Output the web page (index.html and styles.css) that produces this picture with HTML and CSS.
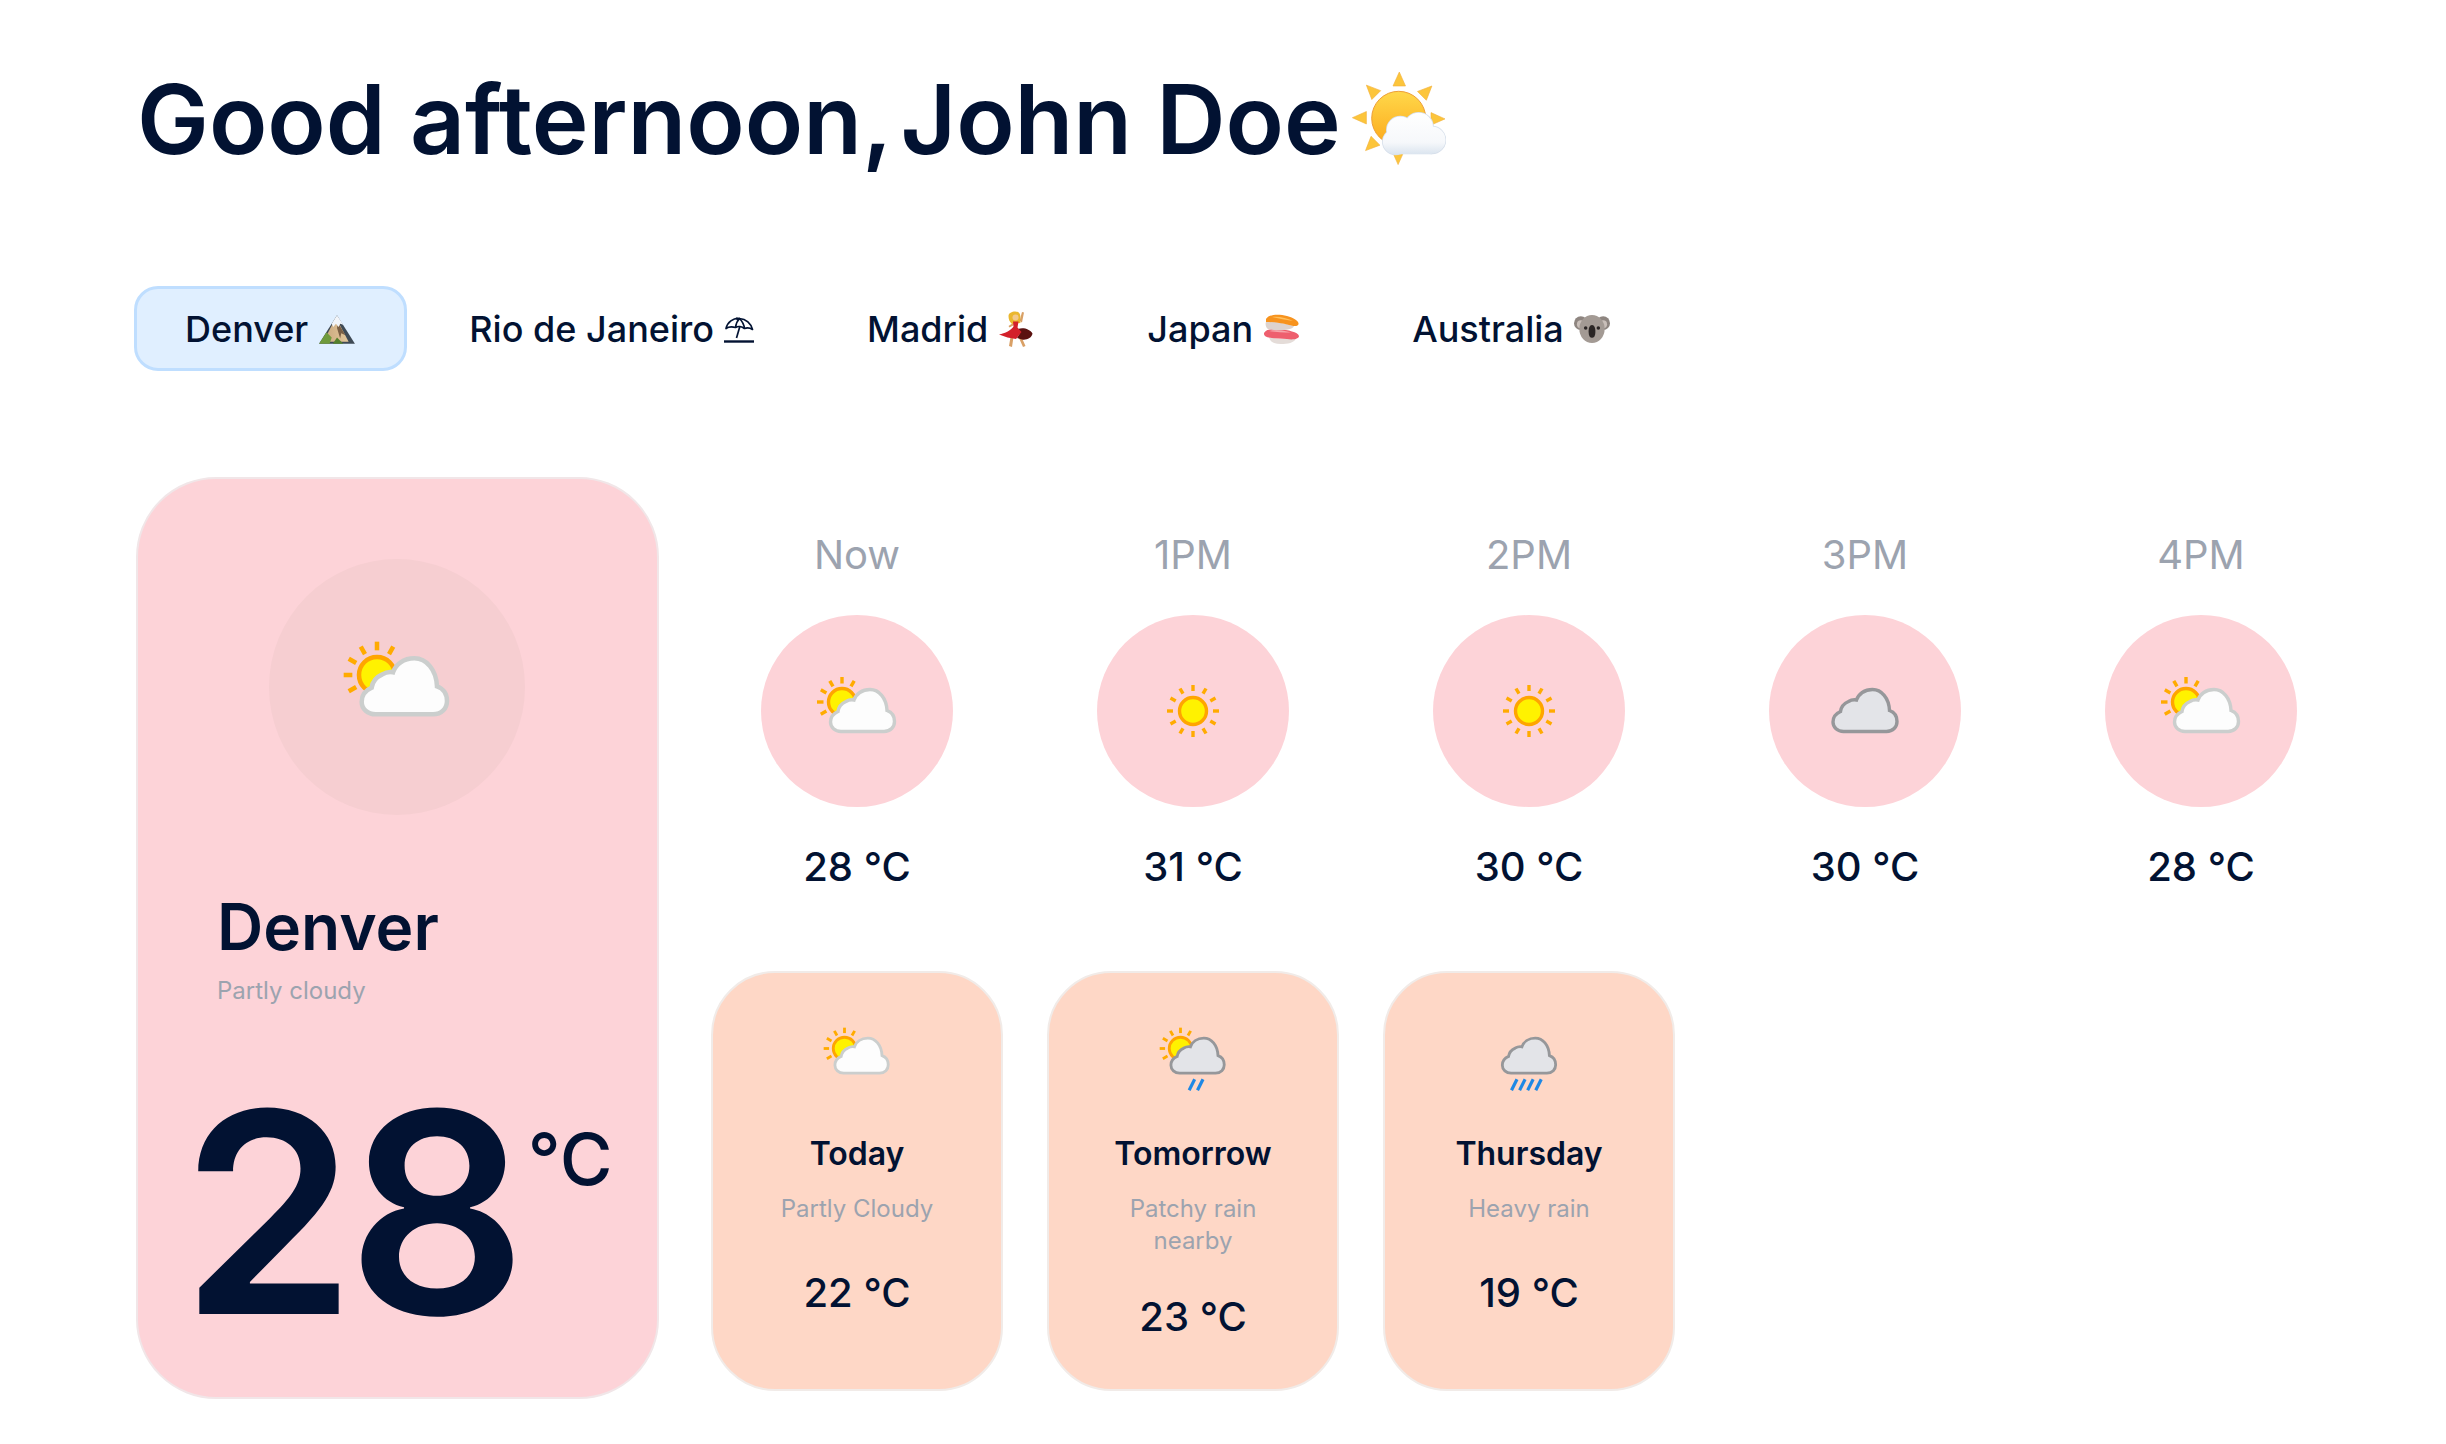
FILE: index.html
```html
<!DOCTYPE html>
<html lang="en">
<head>
  <meta charset="UTF-8" />
  <title>Weather</title>
  <link rel="stylesheet" href="styles.css">
</head>
<body>
  <svg class="sprite" xmlns="http://www.w3.org/2000/svg">
    <defs>
      <linearGradient id="sunGrad" x1="0" y1="0" x2="0" y2="1">
        <stop offset="0" stop-color="#ffd84a"/>
        <stop offset="1" stop-color="#fca91c"/>
      </linearGradient>
      <linearGradient id="cloudGrad" gradientUnits="userSpaceOnUse" x1="0" y1="43" x2="0" y2="85">
        <stop offset="0" stop-color="#ffffff"/>
        <stop offset="0.7" stop-color="#f6f8fb"/>
        <stop offset="1" stop-color="#d9e3ee"/>
      </linearGradient>
      <linearGradient id="rockGrad" x1="0" y1="0" x2="1" y2="0">
        <stop offset="0" stop-color="#c9a77e"/>
        <stop offset="1" stop-color="#e3c79a"/>
      </linearGradient>

      <path id="cloudShape" d="M12 43.5H55C61.5 43.5 65.5 39 65.5 33.5C65.5 28 62.5 24 58 22.5C57.5 10 50 1.5 41 1.5C33 1.5 27 6 25 12C22 11.5 19.5 12 17 13.5C12.5 15.5 9.5 19.5 9 23.5C4.5 25.5 1.5 29 1.5 34C1.5 39.5 6 43.5 12 43.5Z"/>

      <g id="halfRays" class="rays">
        <path d="M33 14V20.5"/>
        <path d="M20.8 17.8L24 23.4"/>
        <path d="M45.2 17.8L42 23.4"/>
        <path d="M11.8 26.8L17.4 30"/>
        <path d="M8 39H14.5"/>
        <path d="M11.8 51.2L17.4 48"/>
      </g>

      <symbol id="icon-partly" viewBox="0 0 96 96">
        <use href="#halfRays"/>
        <circle class="sun" cx="33" cy="39" r="13.5"/>
        <use class="cloud-light" href="#cloudShape" x="20" y="25"/>
      </symbol>

      <symbol id="icon-sunny" viewBox="0 0 96 96">
        <g class="rays">
          <path d="M48 22V28"/><path d="M48 68V74"/><path d="M22 48H28"/><path d="M68 48H74"/>
          <path d="M35 25.5L38 30.7"/><path d="M61 25.5L58 30.7"/><path d="M35 70.5L38 65.3"/><path d="M61 70.5L58 65.3"/>
          <path d="M25.5 35L30.7 38"/><path d="M70.5 35L65.3 38"/><path d="M25.5 61L30.7 58"/><path d="M70.5 61L65.3 58"/>
        </g>
        <circle class="sun" cx="48" cy="48" r="13.5"/>
      </symbol>

      <symbol id="icon-cloudy" viewBox="0 0 96 96">
        <use class="cloud-dark" href="#cloudShape" x="14.5" y="25"/>
      </symbol>

      <symbol id="icon-patchy" viewBox="0 0 96 96">
        <use href="#halfRays"/>
        <circle class="sun" cx="33" cy="39" r="13.5"/>
        <use class="cloud-dark" href="#cloudShape" x="20" y="25"/>
        <g class="rain">
          <path d="M50 76L43.4 89"/><path d="M60 76L53.4 89"/>
        </g>
      </symbol>

      <symbol id="icon-heavy" viewBox="0 0 96 96">
        <use class="cloud-dark" href="#cloudShape" x="14.5" y="25"/>
        <g class="rain">
          <path d="M33.6 76L27 89"/><path d="M43.3 76L36.7 89"/><path d="M53 76L46.4 89"/><path d="M62.7 76L56.1 89"/>
        </g>
      </symbol>

      <symbol id="emoji-sun-cloud" viewBox="0 0 96 96">
        <g id="tri">
          <path class="emoji-ray" d="M49.3 2L43 16H55.5Z"/>
        </g>
        <use href="#tri" transform="rotate(45 48.7 48.3)"/>
        <use href="#tri" transform="rotate(90 48.7 48.3)"/>
        <use href="#tri" transform="rotate(135 48.7 48.3)"/>
        <use href="#tri" transform="rotate(180 48.7 48.3)"/>
        <use href="#tri" transform="rotate(225 48.7 48.3)"/>
        <use href="#tri" transform="rotate(270 48.7 48.3)"/>
        <use href="#tri" transform="rotate(315 48.7 48.3)"/>
        <circle cx="48.7" cy="48.3" r="27" fill="url(#sunGrad)" stroke="#ee9f38" stroke-width="1"/>
        <g fill="#d5deea" stroke="#d5deea" stroke-width="1.6">
          <circle cx="50.3" cy="60" r="13.5"/>
          <circle cx="68.7" cy="57" r="14.3"/>
          <circle cx="82" cy="70" r="13.5"/>
          <circle cx="45.5" cy="71.7" r="12.7"/>
        </g>
        <g fill="url(#cloudGrad)">
          <circle cx="50.3" cy="60" r="13.5"/>
          <circle cx="68.7" cy="57" r="14.3"/>
          <circle cx="82" cy="70" r="13.5"/>
          <circle cx="45.5" cy="71.7" r="12.7"/>
          <rect x="45" y="60" width="37" height="24.3"/>
        </g>
      </symbol>

      <symbol id="emoji-mountain" viewBox="0 0 36 36">
        <path fill="#3f4a55" d="M18 5L35 32H1Z"/>
        <path fill="url(#rockGrad)" d="M17 7L29 30H5Z"/>
        <path fill="#6f9a3c" d="M1 32L8 21L13 26L11 32Z"/>
        <path fill="#55802c" d="M14 32L18 26L24 32Z"/>
        <path fill="#7a5f45" d="M19 12L26 24L22 22L21 27L18 17Z"/>
        <path fill="#f2f5fa" d="M18 5L24 14L21 13L19.5 16L17 13L14.5 16L13 13Z"/>
      </symbol>

      <symbol id="emoji-umbrella" viewBox="0 0 30 28">
        <g class="umbrella">
          <path d="M2 13.5C3.5 7 9 3 15.5 3.5C22 4 27 8.5 28.5 14.5C25.5 12.5 23 12.5 20.5 13.5C18 11.5 14 11 11.5 12.5C8 11.5 5 11.5 2 13.5Z"/>
          <path d="M11.5 12.5C12 9 13 6 15.5 3.5C18 6 20 9.5 20.5 13.5"/>
          <path d="M15.7 12L12.5 23"/>
          <path d="M0 26.5H30" stroke-width="2.4"/>
          <path d="M12.5 2.5L13.5 5"/>
        </g>
      </symbol>

      <symbol id="emoji-dancer" viewBox="0 0 34 36">
        <path fill="#d9a066" d="M20.5 10L23 1L25 1.5L23 11.5ZM14 12L9.5 15L10.5 16.5L15 14ZM11.5 26L10 35L13 36L14.5 26ZM19.5 26L24 36L26.5 35L22.5 26Z"/>
        <path fill="#eab72e" d="M9.5 5C9.5 0.5 19.5 -1.5 21 3.5C22 7 20.5 9 21.5 12C18 12 16 13 13 13C10.5 11 9.5 8 9.5 5Z"/>
        <circle cx="16.5" cy="6.5" r="3" fill="#f3c98b"/>
        <path fill="#5a1210" d="M19 18C24 16 31 18 33.5 22.5C33 27 27 29.5 23 28.5L18 27L21 22Z"/>
        <path fill="#d3202a" d="M14 10.5H19.5L18.5 16.5L22.5 21L17 28L8.5 26.5L0 23.5C6 22.5 12.5 19 14.5 15.5Z"/>
      </symbol>

      <symbol id="emoji-sushi" viewBox="0 0 36 30">
        <path fill="#e4dcd8" d="M6 23C12 25 24 26 33 24C32 29 24 30 18 30C11 30 7 28 6 23Z"/>
        <path fill="#ee5f6e" d="M1 20C1 16 8 14 16 15C25 16 35 18 36 22C36 25 30 26 24 25C15 24 1 25 1 20Z"/>
        <path fill="#f7a5ab" d="M6 17C12 15.5 20 16.5 28 18.5C20 18.5 12 18 6 17Z"/>
        <path fill="#ddd3ce" d="M3 8C10 7 20 9 31 12C30 17 10 17 5 15C3 14 2 10 3 8Z"/>
        <path fill="#f7931e" d="M3 5C6 0 16 0 24 2C31 4 36 7 35.5 10C35 13 30 12 26 11C18 9 10 8 3 8Z"/>
        <path fill="#ffc05c" d="M9 3C15 2 24 4 30 7C23 6 16 4.5 9 3Z"/>
      </symbol>

      <symbol id="emoji-koala" viewBox="0 0 37 30">
        <circle cx="7" cy="9" r="7" fill="#8e8580"/>
        <circle cx="30" cy="9" r="7" fill="#8e8580"/>
        <circle cx="7" cy="10" r="4" fill="#c9bfb9"/>
        <circle cx="30" cy="10" r="4" fill="#c9bfb9"/>
        <ellipse cx="18.5" cy="15" rx="13" ry="14.5" fill="#a39a94"/>
        <circle cx="12" cy="14" r="1.8" fill="#2b2625"/>
        <circle cx="25" cy="14" r="1.8" fill="#2b2625"/>
        <path fill="#2b2625" d="M18.5 11C21 11 22 14 22 18C22 22 20.5 24 18.5 24C16.5 24 15 22 15 18C15 14 16 11 18.5 11Z"/>
      </symbol>
    </defs>
  </svg>

  <div class="page">
    <h1 class="greeting">
      <span>Good afternoon,</span>
      <span>John Doe</span>
      <svg class="greeting-emoji"><use href="#emoji-sun-cloud"/></svg>
    </h1>

    <div class="tabs">
      <button class="tab active">Denver <svg class="tab-emoji mountain"><use href="#emoji-mountain"/></svg></button>
      <button class="tab">Rio de Janeiro <svg class="tab-emoji umbrella-icon"><use href="#emoji-umbrella"/></svg></button>
      <button class="tab">Madrid <svg class="tab-emoji dancer"><use href="#emoji-dancer"/></svg></button>
      <button class="tab">Japan <svg class="tab-emoji sushi"><use href="#emoji-sushi"/></svg></button>
      <button class="tab">Australia <svg class="tab-emoji koala"><use href="#emoji-koala"/></svg></button>
    </div>

    <div class="weather">
      <div class="current">
        <div class="current-circle">
          <svg class="current-icon"><use href="#icon-partly"/></svg>
        </div>
        <h2 class="current-city">Denver</h2>
        <p class="current-text">Partly cloudy</p>
        <div class="current-temp">
          <span class="current-value">28</span>
          <span class="current-unit">°C</span>
        </div>
      </div>

      <div class="forecast">
        <div class="hours">
          <div class="hour">
            <div class="hour-label">Now</div>
            <div class="hour-circle"><svg class="hour-icon"><use href="#icon-partly"/></svg></div>
            <div class="hour-temp">28 °C</div>
          </div>
          <div class="hour">
            <div class="hour-label">1PM</div>
            <div class="hour-circle"><svg class="hour-icon"><use href="#icon-sunny"/></svg></div>
            <div class="hour-temp">31 °C</div>
          </div>
          <div class="hour">
            <div class="hour-label">2PM</div>
            <div class="hour-circle"><svg class="hour-icon"><use href="#icon-sunny"/></svg></div>
            <div class="hour-temp">30 °C</div>
          </div>
          <div class="hour">
            <div class="hour-label">3PM</div>
            <div class="hour-circle"><svg class="hour-icon"><use href="#icon-cloudy"/></svg></div>
            <div class="hour-temp">30 °C</div>
          </div>
          <div class="hour">
            <div class="hour-label">4PM</div>
            <div class="hour-circle"><svg class="hour-icon"><use href="#icon-partly"/></svg></div>
            <div class="hour-temp">28 °C</div>
          </div>
        </div>

        <div class="days">
          <div class="day">
            <svg class="day-icon"><use href="#icon-partly"/></svg>
            <div class="day-name">Today</div>
            <div class="day-text">Partly Cloudy</div>
            <div class="day-temp">22 °C</div>
          </div>
          <div class="day">
            <svg class="day-icon"><use href="#icon-patchy"/></svg>
            <div class="day-name">Tomorrow</div>
            <div class="day-text">Patchy rain nearby</div>
            <div class="day-temp">23 °C</div>
          </div>
          <div class="day">
            <svg class="day-icon"><use href="#icon-heavy"/></svg>
            <div class="day-name">Thursday</div>
            <div class="day-text">Heavy rain</div>
            <div class="day-temp">19 °C</div>
          </div>
        </div>
      </div>
    </div>
  </div>
</body>
</html>
```

FILE: styles.css
```css
* {
  box-sizing: border-box;
}
body {
  margin: 0;
  background-color: #fff;
  color: #021232;
  font-family: Inter, "Noto Sans", sans-serif;
}
.sprite {
  display: block;
  width: 0;
  height: 0;
}
.page {
  padding: 62px 100px 0 134px;
}

/* greeting */
.greeting {
  display: flex;
  align-items: center;
  gap: 8px;
  margin: 0 0 0 3px;
  font-size: 96px;
  line-height: 115px;
  font-weight: 600;
}
.greeting-emoji {
  width: 96px;
  height: 96px;
  margin: -3px 0 0 1px;
}
.emoji-ray {
  fill: #fcc53b;
  stroke: #f2b03a;
  stroke-width: 0.6;
}

/* tabs */
.tabs {
  display: flex;
  gap: 11px;
  margin-top: 109px;
}
.tab {
  display: flex;
  align-items: center;
  gap: 10px;
  height: 85px;
  padding: 0 48px;
  border: 3px solid transparent;
  border-radius: 24px;
  background: none;
  color: #021232;
  font-family: inherit;
  font-size: 36px;
  font-weight: 550;
}
.tab.active {
  background-color: #e0efff;
  border-color: #bfdeff;
}
.tab-emoji {
  width: 36px;
  height: 36px;
}
.tab-emoji.mountain {
  width: 38px;
  height: 38px;
}
.umbrella-icon {
  width: 30px;
  height: 28px;
}
.umbrella {
  fill: none;
  stroke: #021232;
  stroke-width: 1.7;
  stroke-linejoin: round;
}

/* weather layout */
.weather {
  display: flex;
  gap: 52px;
  margin-top: 106px;
  padding-left: 2px;
}
.current {
  flex: 0 0 523px;
  min-width: 0;
  height: 922px;
  padding: 80px 0 0 79px;
  background-color: #fdd3d8;
  border: 2px solid #f1e6e8;
  border-radius: 80px;
}
.current-circle {
  display: flex;
  align-items: center;
  justify-content: center;
  width: 256px;
  height: 256px;
  margin-left: 52px;
  border-radius: 50%;
  background-color: #f6ced1;
}
.current-icon {
  width: 128px;
  height: 128px;
}
.current-city {
  margin: 73px 0 0;
  font-size: 64px;
  line-height: 77px;
  font-weight: 600;
}
.current-text {
  margin: 10px 0 0;
  font-size: 24px;
  line-height: 32px;
  color: #9ca3af;
}
.current-temp {
  display: flex;
  align-items: flex-start;
  margin: 66px 0 0 -36px;
}
.current-value {
  font-size: 280px;
  line-height: 280px;
  font-weight: 600;
  letter-spacing: -8px;
}
.current-unit {
  margin: 50px 0 0 9px;
  font-size: 72px;
  line-height: 72px;
  font-weight: 500;
}

/* hourly */
.forecast {
  flex: 1;
}
.hours,
.days {
  display: grid;
  grid-template-columns: repeat(5, 292px);
  column-gap: 44px;
}
.hours {
  padding-top: 54px;
}
.hour {
  display: flex;
  flex-direction: column;
  align-items: center;
}
.hour-label {
  font-size: 40px;
  line-height: 48px;
  color: #9ca3af;
}
.hour-circle {
  display: flex;
  align-items: center;
  justify-content: center;
  width: 192px;
  height: 192px;
  margin-top: 36px;
  border-radius: 50%;
  background-color: #fdd3d8;
}
.hour-icon {
  width: 96px;
  height: 96px;
}
.hour-temp {
  margin-top: 36px;
  font-size: 40px;
  line-height: 48px;
  font-weight: 550;
}

/* daily */
.days {
  margin-top: 80px;
}
.day {
  display: flex;
  flex-direction: column;
  align-items: center;
  height: 420px;
  padding: 43px 48px 0;
  text-align: center;
  background-color: #fed7c6;
  border: 2px solid #f1ebe8;
  border-radius: 64px;
}
.day-icon {
  flex: none;
  width: 80px;
  height: 80px;
}
.day-name {
  margin-top: 38px;
  font-size: 32px;
  line-height: 40px;
  font-weight: 600;
}
.day-text {
  min-height: 40px;
  margin-top: 19px;
  font-size: 24px;
  line-height: 32px;
  color: #9ca3af;
}
.day-temp {
  margin-top: 36px;
  font-size: 40px;
  line-height: 48px;
  font-weight: 550;
}

/* weather icon parts */
.rays {
  fill: none;
  stroke: #ffab00;
  stroke-width: 3.4;
}
.sun {
  fill: #fff200;
  stroke: #ffa500;
  stroke-width: 3.4;
}
.cloud-light {
  fill: #fdfdfd;
  stroke: #cbcecd;
  stroke-width: 3.4;
}
.cloud-dark {
  fill: #e3e4e8;
  stroke: #96979a;
  stroke-width: 3.4;
}
.rain {
  fill: none;
  stroke: #1e88e5;
  stroke-width: 3.8;
}
```
